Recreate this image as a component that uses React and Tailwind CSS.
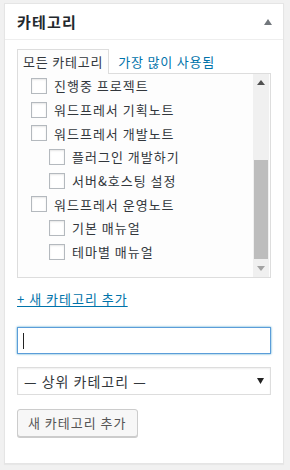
import React from "react";

const font = { fontFamily: '"Noto Sans CJK KR", "Noto Sans", sans-serif' };

function Box() {
  return <span className="inline-block w-[16px] h-[16px] border border-[#b4b9be] bg-white shadow-[inset_0_1px_2px_rgba(0,0,0,0.1)] shrink-0" />;
}

const items = [
  ["진행중 프로젝트", 0],
  ["워드프레서 기획노트", 0],
  ["워드프레서 개발노트", 0],
  ["플러그인 개발하기", 1],
  ["서버&호스팅 설정", 1],
  ["워드프레서 운영노트", 0],
  ["기본 매뉴얼", 1],
  ["테마별 매뉴얼", 1],
];

export default function App() {
  return (
    <div className="w-[290px] h-[470px] bg-[#f1f1f1] pt-[3px] pl-[4px] pr-[6px]" style={font}>
      <div className="h-[461px] bg-white border border-[#e5e5e5] shadow-[0_1px_1px_rgba(0,0,0,0.04)]">
        <div className="h-[36px] border-b border-[#eeeeee] flex items-center justify-between pl-[12px] pr-[10px]">
          <span className="text-[15px] font-semibold text-[#23282d] leading-none tracking-[1.2px]">카테고리</span>
          <svg width="10" height="8" viewBox="0 0 10 8"><path d="M5 1 L9 7 L1 7 Z" fill="#72777c" /></svg>
        </div>
        <div className="px-[12px] pt-[9px]">
          <div className="flex items-end h-[25px] text-[13px] tracking-[0.8px]">
            <div className="h-[25px] px-[5px] border border-b-0 border-[#dddddd] bg-[#fdfdfd] text-[#32373c] flex items-center relative z-10">모든 카테고리</div>
            <div className="h-[25px] px-[9px] text-[#0073aa] flex items-center">가장 많이 사용됨</div>
          </div>
          <div className="h-[205px] border border-[#dddddd] bg-[#fdfdfd] mt-[-1px] flex relative">
            <div className="flex-1 pl-[13px] pt-0">
              {items.map(([t, l], i) => (
                <div key={i} className={"flex items-center h-[23.7px] text-[13px] text-[#32373c] tracking-[1px] " + (l ? "pl-[18px]" : "")}>
                  <Box />
                  <span className="ml-[7px] leading-none">{t}</span>
                </div>
              ))}
            </div>
            <div className="w-[16px] mr-[1px] bg-[#f0f0f0] flex flex-col items-center">
              <div className="h-[17px] flex items-center justify-center">
                <svg width="8" height="5" viewBox="0 0 8 5"><path d="M4 0 L8 5 L0 5 Z" fill="#505050" /></svg>
              </div>
              <div className="h-[69px]" />
              <div className="w-[14px] h-[99px] bg-[#bdbdbd]" />
              <div className="flex-1 flex items-center justify-center">
                <svg width="8" height="5" viewBox="0 0 8 5"><path d="M0 0 L8 0 L4 5 Z" fill="#a3a3a3" /></svg>
              </div>
            </div>
          </div>
          <div className="mt-[11px] h-[18px] flex items-center">
            <span className="text-[13px] text-[#0073aa] underline underline-offset-2 leading-none tracking-[1px]">+ 새 카테고리 추가</span>
          </div>
          <div className="mt-[20px] h-[27px] border border-[#5b9dd9] shadow-[0_0_2px_rgba(30,140,190,0.8)] bg-white flex items-center pl-[5px]">
            <span className="w-[1px] h-[16px] bg-[#222]" />
          </div>
          <div className="mt-[13px] h-[28px] border border-[#dddddd] bg-white shadow-[inset_0_1px_2px_rgba(0,0,0,0.07)] flex items-center justify-between pl-[6px] pr-[6px] text-[14px] text-[#32373c]">
            <span className="tracking-[1px]">— 상위 카테고리 —</span>
            <svg width="7" height="6" viewBox="0 0 7 6"><path d="M0 0 L7 0 L3.5 6 Z" fill="#222" /></svg>
          </div>
          <div className="mt-[14px] flex">
            <div className="h-[28px] px-[10px] border border-[#cccccc] bg-[#f7f7f7] rounded-[3px] shadow-[0_1px_0_#cccccc] text-[13px] text-[#555555] flex items-center tracking-[1px]">새 카테고리 추가</div>
          </div>
        </div>
      </div>
    </div>
  );
}
